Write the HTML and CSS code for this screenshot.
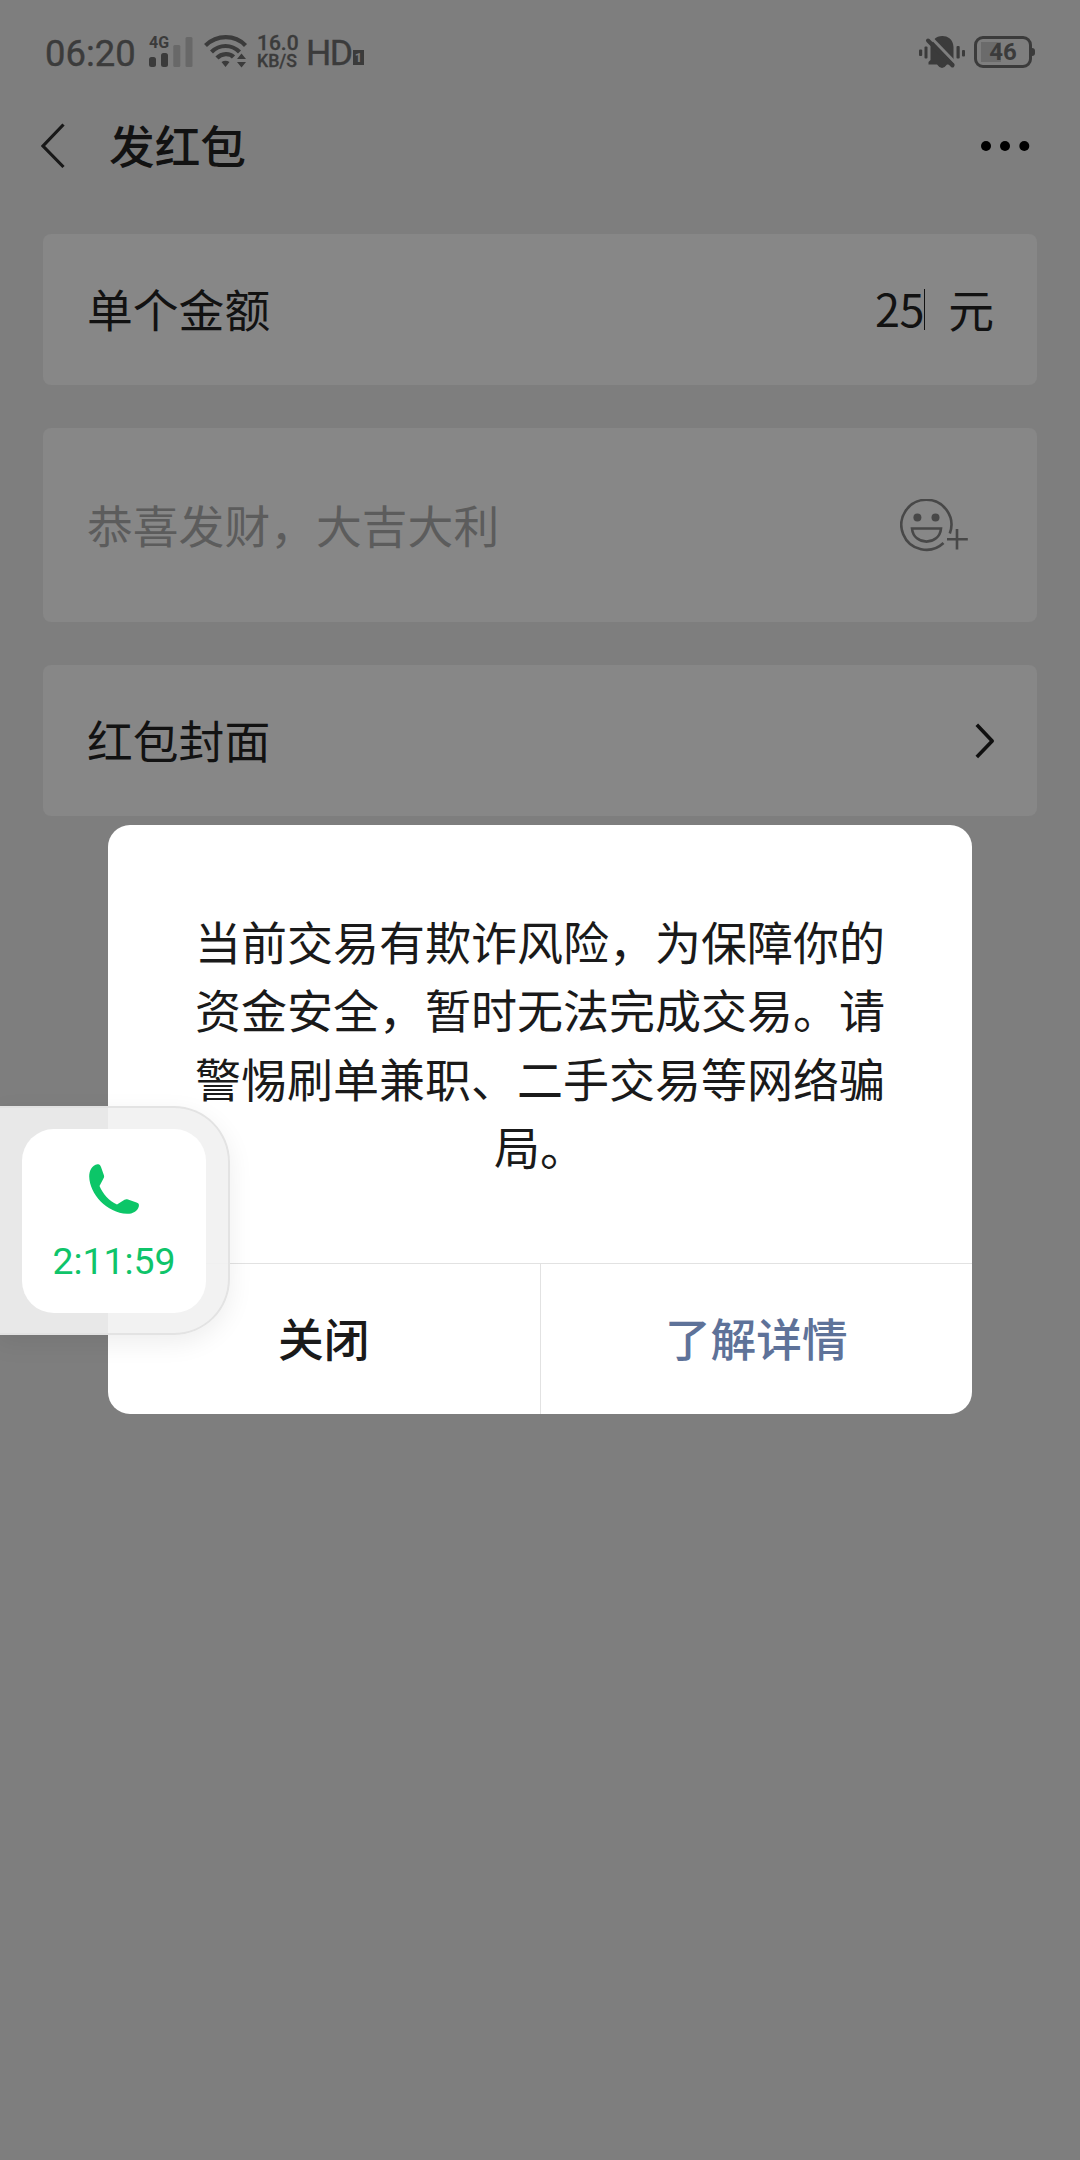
FILE: index.html
```html
<!DOCTYPE html>
<html lang="zh-CN">
<head>
<meta charset="utf-8">
<title>发红包</title>
<link rel="stylesheet" href="styles.css">
</head>
<body>
<div class="screen">
  <header class="status">
    <span class="clock">06:20</span>
    <div class="signal">
      <span class="net">4G</span>
      <svg width="44" height="34" viewBox="0 0 44 34">
        <g fill="#3b3b3b"><rect x="0" y="21" width="7" height="10" rx="2.5"/><rect x="12" y="17" width="7" height="14" rx="2.5"/></g>
        <g fill="#686868"><rect x="24.300" y="9" width="7" height="22" rx="1.500"/><rect x="36.500" y="1" width="7" height="30" rx="1.500"/></g>
      </svg>
    </div>
    <svg class="wifi" width="44" height="36" viewBox="0 0 44 36">
      <g fill="none" stroke="#3b3b3b" stroke-width="4.200">
        <path d="M1.500 11.500C13 .4 31 .4 41.500 11.500"/>
        <path d="M7.500 18C15.500 10 27.500 10 35.500 18"/>
        <path d="M13 24C17.500 19 26 19 29.500 23"/>
      </g>
      <path fill="#3b3b3b" d="M17.500 28q4-2.500 8 0l-4 5zM33 25l4.500-5.500L42 25zM33 28h9l-4.500 5.500z"/>
    </svg>
    <div class="speed"><span>16.0</span><span>KB/S</span></div>
    <span class="hd">HD</span>
    <span class="sim">1</span>
    <svg class="mute" width="46" height="36" viewBox="0 0 46 36">
      <g fill="#3b3b3b">
        <rect x="0" y="15.500" width="3.200" height="6.500" rx="1"/><rect x="5.500" y="12.500" width="3" height="12" rx="1"/>
        <rect x="37.500" y="12" width="3.200" height="12.500" rx="1"/><rect x="43" y="16" width="3" height="6.500" rx="1"/>
        <path d="M15.500 5C20-.2 34 .3 34.500 13v13l1.500 3v1.500H28q-5 7-10 0H9.500V28l2-2V14q0-2 .5-3.500z"/>
      </g>
      <path d="M12 3.500L37 29.500" stroke="#7e7e7e" stroke-width="3"/>
      <path d="M9 6.500L33.500 31.500" stroke="#3b3b3b" stroke-width="4" stroke-linecap="round"/>
    </svg>
    <div class="battery"><span>46</span></div>
    <i class="battery-tip"></i>
  </header>

  <nav class="nav">
    <svg width="24" height="46" viewBox="0 0 24 46"><path d="M22.500 1.500L2 23l20.500 21" fill="none" stroke="#181818" stroke-width="3.200"/></svg>
    <h1>发红包</h1>
    <svg class="more" width="50" height="12" viewBox="0 0 50 12" fill="#000"><circle cx="6" cy="6" r="5"/><circle cx="25" cy="6" r="5"/><circle cx="44.300" cy="6" r="5"/></svg>
  </nav>

  <main class="cards">
    <section class="card">
      <span class="label">单个金额</span>
      <div class="amount"><span class="value">25</span><i class="caret"></i><span class="label">元</span></div>
    </section>
    <section class="card message">
      <span class="label">恭喜发财，大吉大利</span>
      <svg class="emoji" width="70" height="56" viewBox="0 0 70 56">
        <g fill="none" stroke="#484848" stroke-width="2.600">
          <path d="M49.800 34.500A25 25 0 1 0 43.500 44"/>
          <path d="M12 29.500h29C39.500 47 13.500 47 12 29.500z"/>
          <path d="M57 30v20.500M47 40.200h20.800"/>
        </g>
        <circle cx="17.400" cy="18.500" r="4" fill="#484848"/><circle cx="35.500" cy="18.500" r="4" fill="#484848"/>
      </svg>
    </section>
    <section class="card">
      <span class="label">红包封面</span>
      <svg class="chevron" width="20" height="36" viewBox="0 0 20 36"><path d="M1.800 1.800L17.200 18 1.800 34" fill="none" stroke="#101010" stroke-width="3.600" stroke-linejoin="round"/></svg>
    </section>
  </main>

  <div class="dialog" role="dialog">
    <p>当前交易有欺诈风险，为保障你的资金安全，暂时无法完成交易。请警惕刷单兼职、二手交易等网络骗局。</p>
    <div class="actions">
      <button class="close">关闭</button>
      <button class="detail">了解详情</button>
    </div>
  </div>

  <aside class="call">
    <div class="call-card">
      <svg width="50" height="50" viewBox="0 0 50 50"><path fill="#0cc668" d="M8.500.3C10.500 0 11 .8 12 3l3 8.500c.3 1.500 0 2-.8 3.500L10.500 22C14 30 20 37 28 40.500l7.500-4.800c1.200-.7 2-.7 3.500-.3l8.500 3c2.200.8 2.700 1.700 2.300 4C48.500 47.500 43 50 38 49.800 18 49 .5 30 .2 12.500.2 7 3 1 8.500.3z"/></svg>
      <span>2:11:59</span>
    </div>
  </aside>
</div>
</body>
</html>
```
FILE: styles.css
```css
* { box-sizing: border-box; }

body { margin: 0; background: #7e7e7e; }

.screen {
  position: relative;
  width: 1080px;
  height: 2160px;
  overflow: hidden;
  background: #7e7e7e;
  color: #121212;
  font: 46px/68px "Noto Sans CJK SC", sans-serif;
}

svg { display: block; flex: none; }

.status {
  display: flex;
  align-items: flex-start;
  height: 102px;
  padding: 34px 45px 0 45px;
  color: #3b3b3b;
  font-family: Roboto, sans-serif;
  line-height: 36px;
}
.clock { width: 104px; padding-top: 1px; font-size: 36.4px; line-height: 38px; -webkit-text-stroke: .4px; }
.signal { position: relative; width: 44px; margin-top: 2px; }
.net {
  position: absolute;
  left: 0;
  top: 0;
  font-size: 16px;
  font-weight: 700;
  line-height: 14px;
}
.wifi { margin-left: 11px; }
.speed {
  display: flex;
  flex-direction: column;
  width: 49px;
  margin-left: 9px;
  font-weight: 500;
  line-height: 18px;
}
.speed span:first-child { font-size: 21px; -webkit-text-stroke: .3px; }
.speed span:last-child { font-size: 17.7px; -webkit-text-stroke: .3px; }
.hd { width: 46px; font-size: 35.5px; line-height: 38px; letter-spacing: -1.5px; -webkit-text-stroke: .4px; }
.sim {
  width: 11px;
  height: 15px;
  margin: 16px 0 0 1px;
  background: #3b3b3b;
  color: #7e7e7e;
  font-size: 13px;
  font-weight: 700;
  line-height: 15px;
  text-align: center;
}
.mute { margin-left: auto; }
.battery {
  width: 58px;
  height: 32px;
  margin: 2px -1px 0 9px;
  border: 3px solid #3b3b3b;
  border-radius: 9px;
  background: linear-gradient(#6b6b6b, #6b6b6b) 4px 3px / 20px 20px no-repeat;
  font-size: 24px;
  font-weight: 700;
  line-height: 27px;
  text-align: center;
}
.battery-tip { width: 4px; height: 8px; margin-top: 14px; border-radius: 0 3px 3px 0; background: #3b3b3b; }

.nav { display: flex; align-items: center; height: 88px; padding: 0 50px 1px 41px; }
.nav h1 { margin: 0 0 0 44px; padding-bottom: 3px; font-size: 45.7px; font-weight: 500; line-height: 68px; }
.more { margin-left: auto; }

.cards { display: flex; flex-direction: column; gap: 43px; padding: 44px 43px 0; }
.card {
  display: flex;
  align-items: center;
  justify-content: space-between;
  height: 151px;
  padding: 0 43px 0 44px;
  border-radius: 8px;
  background: #878787;
}
.label { padding-bottom: 3px; font-size: 45.8px; }
.value { padding-bottom: 4px; font-size: 45px; letter-spacing: -.4px; }
.message { height: 194px; padding-right: 67px; color: #5c5c5c; }
.message .label { padding-bottom: 3px; }
.emoji { margin-top: 3px; }
.amount { display: flex; align-items: center; }
.caret { width: 1px; height: 41px; margin-right: 23px; background: #121212; }
.chevron { margin: 1px -1px 0 0; }

.dialog {
  position: absolute;
  left: 108px;
  top: 825px;
  display: flex;
  flex-direction: column;
  width: 864px;
  height: 589px;
  border-radius: 22px;
  background: #fff;
  overflow: hidden;
}
.dialog p {
  flex: 1;
  margin: 0;
  padding: 81px 87px 0;
  color: #1a1a1a;
  line-height: 68.3px;
  text-align: center;
}
.actions { display: flex; height: 151px; border-top: 1px solid #e2e2e2; }
.actions button {
  flex: 1;
  padding: 0 0 5px;
  border: 0;
  background: none;
  color: #1a1a1a;
  font: 500 45.7px/68px "Noto Sans CJK SC", sans-serif;
}
.actions .detail { border-left: 1px solid #e2e2e2; color: #5e7299; }

.call {
  position: absolute;
  left: -4px;
  top: 1106px;
  width: 234px;
  height: 229px;
  padding: 21px 0 0 24px;
  border: 2px solid rgba(226, 226, 226, .95);
  border-radius: 0 56px 56px 0;
  background: rgba(241, 241, 241, .92);
  box-shadow: 0 8px 26px rgba(0, 0, 0, .07);
}
.call-card {
  display: flex;
  flex-direction: column;
  align-items: center;
  width: 184px;
  height: 184px;
  padding-top: 35px;
  border-radius: 32px;
  background: #fff;
  color: #0fc46a;
  font: 37.4px/44px Roboto, sans-serif;
}
.call-card span { margin-top: 25px; }
```
